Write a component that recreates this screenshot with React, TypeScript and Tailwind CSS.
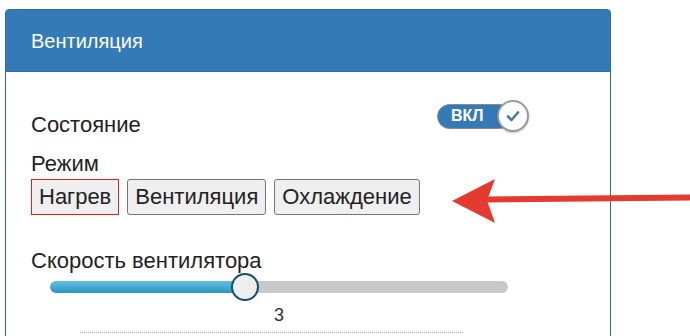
import { useState } from 'react';

const MODES = ['Нагрев', 'Вентиляция', 'Охлаждение'];

export default function App() {
  const [mode, setMode] = useState('Нагрев');
  const speed = 3;
  const pct = 42.5;

  return (
    <div className="relative w-[690px] h-[336px] overflow-hidden bg-white font-['Liberation_Sans',Arial,sans-serif] text-[#222]">
      <div className="ml-[5px] mt-[9px] w-[606px] h-[400px] rounded-t-[4px] border border-[#2e6da4]">
        <div className="h-[62px] flex items-center px-[25px] bg-[#337ab7] border-b border-[#2e6da4] text-white text-[20px]">
          Вентиляция
        </div>

        <div className="px-[25px]">
          <div className="mt-[28px] flex items-start">
            <div className="w-[406px] pt-[12px] text-[22px] leading-[26px]">Состояние</div>
            <div className="flex items-center">
              <div className="h-[25px] w-[75px] rounded-full bg-[#337ab7] border border-[#8a8a8a] flex items-center pl-[13px] text-white text-[16px] font-bold">
                ВКЛ
              </div>
              <div className="-ml-[15px] w-[32px] h-[32px] rounded-full bg-white border-2 border-[#9a9a9a] shadow-[0_1px_2px_rgba(0,0,0,0.25)] flex items-center justify-center">
                <svg width="14" height="12" viewBox="0 0 14 12">
                  <path d="M2 6.5 L5.5 10 L12 2.5" fill="none" stroke="#4b7d97" strokeWidth="2.6" strokeLinecap="round" strokeLinejoin="round" />
                </svg>
              </div>
            </div>
          </div>

          <div className="mt-[13px] text-[22px] leading-[26px]">Режим</div>
          <div className="mt-[2px] flex gap-[8px]">
            {MODES.map((m) => (
              <button
                key={m}
                onClick={() => setMode(m)}
                className={
                  'h-[36px] px-[7px] rounded-[3px] bg-[#efefef] text-[22px] leading-[26px] text-[#222] border ' +
                  (mode === m ? 'border-[#e02020] rounded-none' : 'border-[#767676]')
                }
              >
                {m}
              </button>
            ))}
          </div>

          <div className="mt-[33px] text-[22px] leading-[26px]">Скорость вентилятора</div>
          <div className="relative -mt-[1px] ml-[19px] w-[458px] h-[28px] flex items-center">
            <div className="w-full h-[12px] rounded-full bg-[#c8c8c8] overflow-hidden">
              <div className="h-full bg-gradient-to-b from-[#5fc1e2] to-[#2a94bf] rounded-full" style={{ width: pct + '%' }} />
            </div>
            <div
              className="absolute top-0 w-[28px] h-[28px] -ml-[14px] rounded-full bg-[#eeeeee] border-2 border-[#1b4d6b]"
              style={{ left: pct + '%' }}
            />
          </div>
          <div className="mt-[3px] ml-[243px] text-[18px] leading-[22px] text-[#333]">{speed}</div>
          <div className="mt-[6px] ml-[49px] w-[383px] border-t border-dotted border-[#aaa]" />
        </div>
      </div>

      <svg className="absolute left-0 top-0" width="690" height="336" viewBox="0 0 690 336">
        <path d="M690 197.5 L486 199.5" stroke="#e53a2f" strokeWidth="6" fill="none" />
        <path d="M452 201 L495 179 L487 200.5 L495 223 Z" fill="#e53a2f" />
      </svg>
    </div>
  );
}
